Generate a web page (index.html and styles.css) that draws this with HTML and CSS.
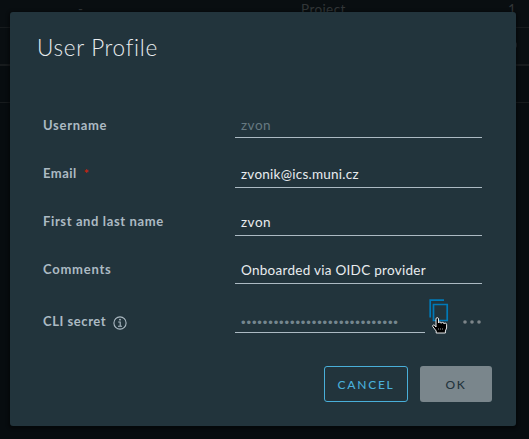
FILE: index.html
```html
<!DOCTYPE html>
<html lang="en">
<head>
<meta charset="utf-8">
<title>User Profile</title>
<link rel="stylesheet" href="styles.css">
</head>
<body>
<div class="table">
  <div class="tr first"><span class="dash">-</span><span class="type">Project</span><span class="count">1</span></div>
  <div class="tr second"><i class="knob"></i></div>
  <div class="tr third"></div>
</div>
<section class="modal" role="dialog" aria-labelledby="title">
  <h1 id="title">User Profile</h1>
  <form>
    <div class="row"><label class="l-user">Username</label><div class="field disabled"><span class="v-short">zvon</span></div></div>
    <div class="row email"><label class="l-email">Email<b>*</b></label><div class="field"><span class="v-mail">zvonik@ics.muni.cz</span></div></div>
    <div class="row"><label class="l-name">First and last name</label><div class="field"><span class="v-short">zvon</span></div></div>
    <div class="row"><label class="l-comments">Comments</label><div class="field"><span class="v-comment">Onboarded via OIDC provider</span></div></div>
    <div class="row secret">
      <label class="l-cli">CLI secret
        <svg class="info" viewBox="0 0 14 14"><circle cx="7" cy="7" r="6.1"/><path d="M5.2 6h2v4M5 10.2h4"/><circle class="dot" cx="7" cy="3.7" r=".9"/></svg>
      </label>
      <div class="field disabled"><span class="bullets">•••••••••••••••••••••••••••••</span></div>
      <svg class="copy" viewBox="0 0 20 24"><path d="M1.2 18.5V1.2H15M4.5 5.5h13.7v16H4.5z"/></svg>
      <svg class="more" viewBox="0 0 20 6"><circle cx="3" cy="3" r="1.8"/><circle cx="10" cy="3" r="1.8"/><circle cx="17" cy="3" r="1.8"/></svg>
      <svg class="cursor" viewBox="0 0 16 17"><path class="hand" d="M4 9V2Q4 .6 5.2.6T6.5 2v4q0-1 1.3-1t1.4 1.3q.1-.9 1.4-.9t1.4 1.4q.1-.7 1.3-.7t1.3 1.5V11l-1.2 3v2H4.2v-2L.8 9.6Q.2 8.2 1.5 8T4 10z"/><path class="creases" d="M6.5 11v2M8.5 11v2M10.5 11v2"/></svg>
    </div>
  </form>
  <footer><button class="cancel" type="button">CANCEL</button><button class="ok" type="button" disabled>OK</button></footer>
</section>
</body>
</html>
```
FILE: styles.css
```css
* { box-sizing: border-box; }
body {
  margin: 0;
  width: 529px;
  height: 439px;
  overflow: hidden;
  padding: 12px 13px 13px 10px;
  background: #070c0f;
  font-family: Lato, "Liberation Sans", sans-serif;
  font-size: 13.5px;
}
.table { position: absolute; inset: 0; color: #323638; background: #070c0f; }
.tr { display: flex; border-bottom: 1px solid #171b1d; }
.first { height: 28px; padding-left: 78px; line-height: 18px; background: #090e11; }
.dash { width: 223px; }
.type { width: 207px; letter-spacing: .4px; }
.second { height: 38px; border-bottom-width: 2px; background: #090e11; }
.knob { width: 8px; height: 8px; margin: 13px 0 0 509px; border-radius: 50%; background: #24292c; }
.third { height: 37px; }
.modal {
  position: relative;
  width: 506px;
  height: 414px;
  padding: 22px 24px 24px 27px;
  border-radius: 3px;
  background: #22343c;
  box-shadow: 0 1px 3px 2px rgba(0, 0, 0, .35);
}
h1 {
  margin: 0;
  height: 79px;
  color: #e9ecef;
  font-size: 22.5px;
  font-weight: 300;
  line-height: 28px;
  letter-spacing: .7px;
}
form { padding: 0 10px 0 6px; }
.row { display: grid; grid-template-columns: 192px 247px; height: 48px; }
label { color: #acbac3; font-weight: 700; font-size: 13px; line-height: 24px; white-space: nowrap; }
label b { margin-left: 7px; color: #c32512; font-size: 12px; }
.field {
  height: 25px;
  padding-left: 6px;
  border-bottom: 1px solid #acbac3;
  color: #e9ecef;
  line-height: 24px;
  white-space: nowrap;
}
.row:nth-child(n+2) .field { height: 27px; padding-top: 1px; }
.disabled { color: #667981; }
.secret { position: relative; grid-template-columns: 192px 190px 30px 1fr; height: 58px; padding-top: 4px; }
.row.secret .field { height: 24px; padding-top: 0; color: #75868e; line-height: 26px; }
.l-cli { display: flex; align-items: center; height: 24px; gap: 7px; }
.info { width: 14px; height: 14px; margin-top: 3px; fill: none; stroke: #acbac3; stroke-width: 1.1; }
.info .dot { fill: #acbac3; stroke: none; }
.copy { width: 20px; height: 24px; margin: -10px 0 0 4px; fill: none; stroke: #0079b8; stroke-width: 1.7; }
.more { width: 20px; height: 6px; margin: 10px 0 0 7px; fill: #7d8589; }
.cursor { position: absolute; left: 389px; top: 12px; width: 16px; height: 17px; }
.hand { fill: #000; stroke: #fff; stroke-width: .9; }
.creases { fill: none; stroke: #999; stroke-width: .5; }
footer { display: flex; justify-content: flex-end; gap: 12px; margin-top: 3px; }
button {
  height: 36px;
  padding: 0;
  border-radius: 3px;
  font: 500 12px/37px Lato, "Liberation Sans", sans-serif;
  letter-spacing: 1.75px;
}
.cancel { width: 84px; border: 1px solid #49afd9; background: none; color: #49afd9; line-height: 35px; }
.ok { width: 72px; border: 0; background: #7a868c; color: #22343c; }
.l-user { letter-spacing: .7px; }
.l-email { letter-spacing: .5px; }
.l-name { letter-spacing: .62px; }
.l-comments { letter-spacing: .75px; }
.l-cli { letter-spacing: .55px; }
.v-short { letter-spacing: .5px; }
.v-mail { letter-spacing: .25px; }
.v-comment { letter-spacing: .28px; }
.bullets { font-family: "Liberation Sans", sans-serif; font-size: 13px; letter-spacing: .89px; }
```
